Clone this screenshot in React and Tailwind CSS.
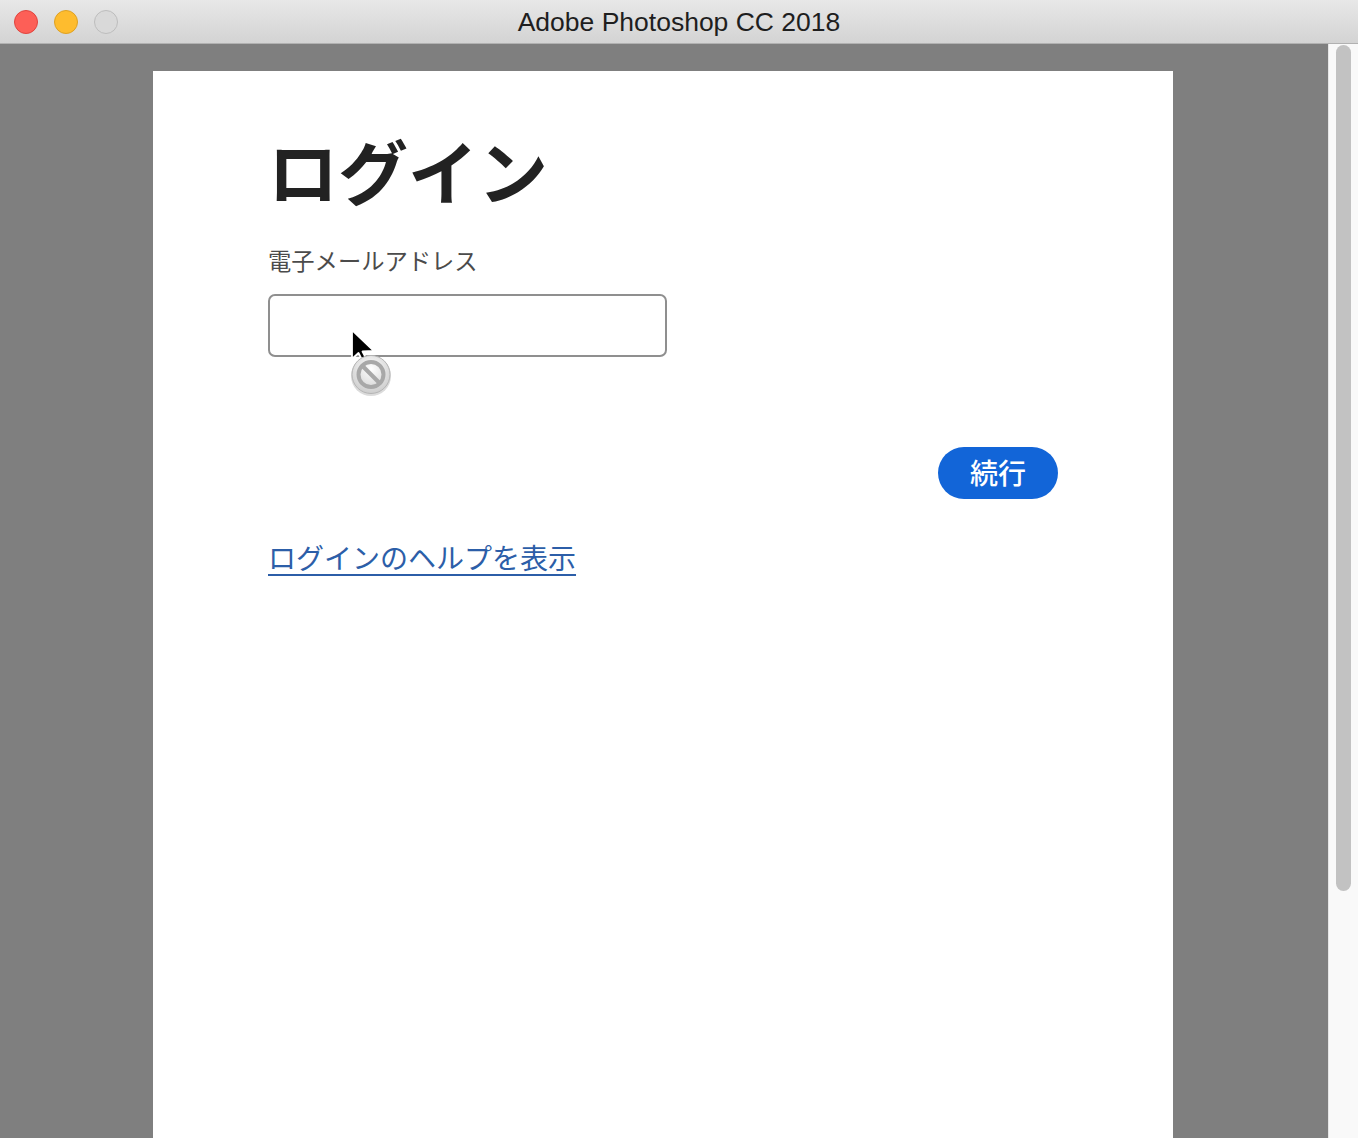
import React from 'react';

const jp = { fontFamily: '"Noto Sans CJK JP", "Noto Sans", sans-serif' };

const Cursor = () => (
    <svg className="absolute left-[193px] top-[256px]" width="62" height="86" viewBox="0 0 62 86">
        <defs>
            <radialGradient id="ring" cx="50%" cy="35%" r="65%">
                <stop offset="0%" stopColor="#ffffff" />
                <stop offset="100%" stopColor="#cdcdcd" />
            </radialGradient>
        </defs>
        {/* arrow */}
        <path d="M6 3 L6 32 L12.5 26 L17 35 L21 33 L16.5 24.5 L28 24 Z" fill="#000" stroke="#fff" strokeWidth="1.8" strokeLinejoin="round" />
        {/* no-entry badge */}
        <circle cx="25" cy="49" r="20" fill="#000" opacity="0.14" />
        <circle cx="25" cy="47.5" r="19" fill="url(#ring)" stroke="#b5b5b5" strokeWidth="1" />
        <circle cx="25" cy="47.5" r="12.5" fill="none" stroke="#a8a8a8" strokeWidth="4" />
        <line x1="16.5" y1="39" x2="33.5" y2="56" stroke="#a8a8a8" strokeWidth="4" />
    </svg>
);

const App = () => {
    return (
        <div className="w-[1358px] h-[1138px] overflow-hidden flex flex-col bg-[#7f7f7f]">
            {/* Title bar */}
            <div className="relative h-[44px] shrink-0 bg-gradient-to-b from-[#e8e8e8] to-[#d3d3d3] border-b border-[#b1b1b1] flex items-center">
                <div className="flex items-center gap-[16px] pl-[14px]">
                    <span className="w-[24px] h-[24px] rounded-full bg-[#fd5f57] border border-[#e0443e]" />
                    <span className="w-[24px] h-[24px] rounded-full bg-[#febc2e] border border-[#dea123]" />
                    <span className="w-[24px] h-[24px] rounded-full bg-[#d9d9d9] border border-[#bdbdbd]" />
                </div>
                <div
                    className="absolute inset-0 flex items-center justify-center text-[26.5px] text-[#1e1e1e] pt-[2px]"
                    style={{ fontFamily: '"Liberation Sans", Arial, sans-serif' }}
                >
                    Adobe Photoshop CC 2018
                </div>
            </div>

            <div className="flex flex-1 min-h-0">
                {/* Content area */}
                <div className="flex-1 pt-[27px] pl-[153px]">
                    <div className="relative w-[1020px] h-full bg-white px-[115px] pt-[54px]" style={jp}>
                        <h1 className="text-[70px] font-bold leading-[90px] text-[#222]">ログイン</h1>
                        <label className="block mt-[28px] text-[23.3px] leading-[34px] text-[#4b4b4b]">電子メールアドレス</label>
                        <input
                            type="text"
                            className="block mt-[17px] w-[399px] h-[63px] border-2 border-[#8f8f8f] rounded-[7px] outline-none"
                        />
                        <div className="flex justify-end mt-[90px]">
                            <button className="w-[120px] h-[52px] rounded-full bg-[#1265d8] text-white text-[28px] font-medium leading-none pb-[3px]">
                                続行
                            </button>
                        </div>
                        <a href="#" className="inline-block mt-[38px] text-[28px] leading-[40px] text-[#2c5ea8] underline underline-offset-[5px] decoration-2">
                            ログインのヘルプを表示
                        </a>
                        <Cursor />
                    </div>
                </div>

                {/* Scrollbar */}
                <div className="w-[30px] shrink-0 bg-[#f9f9f9] border-l border-[#e6e6e6] pl-[7px] pt-[1px]">
                    <div className="w-[15px] h-[846px] rounded-full bg-[#c2c2c2]" />
                </div>
            </div>
        </div>
    );
};

export default App;
